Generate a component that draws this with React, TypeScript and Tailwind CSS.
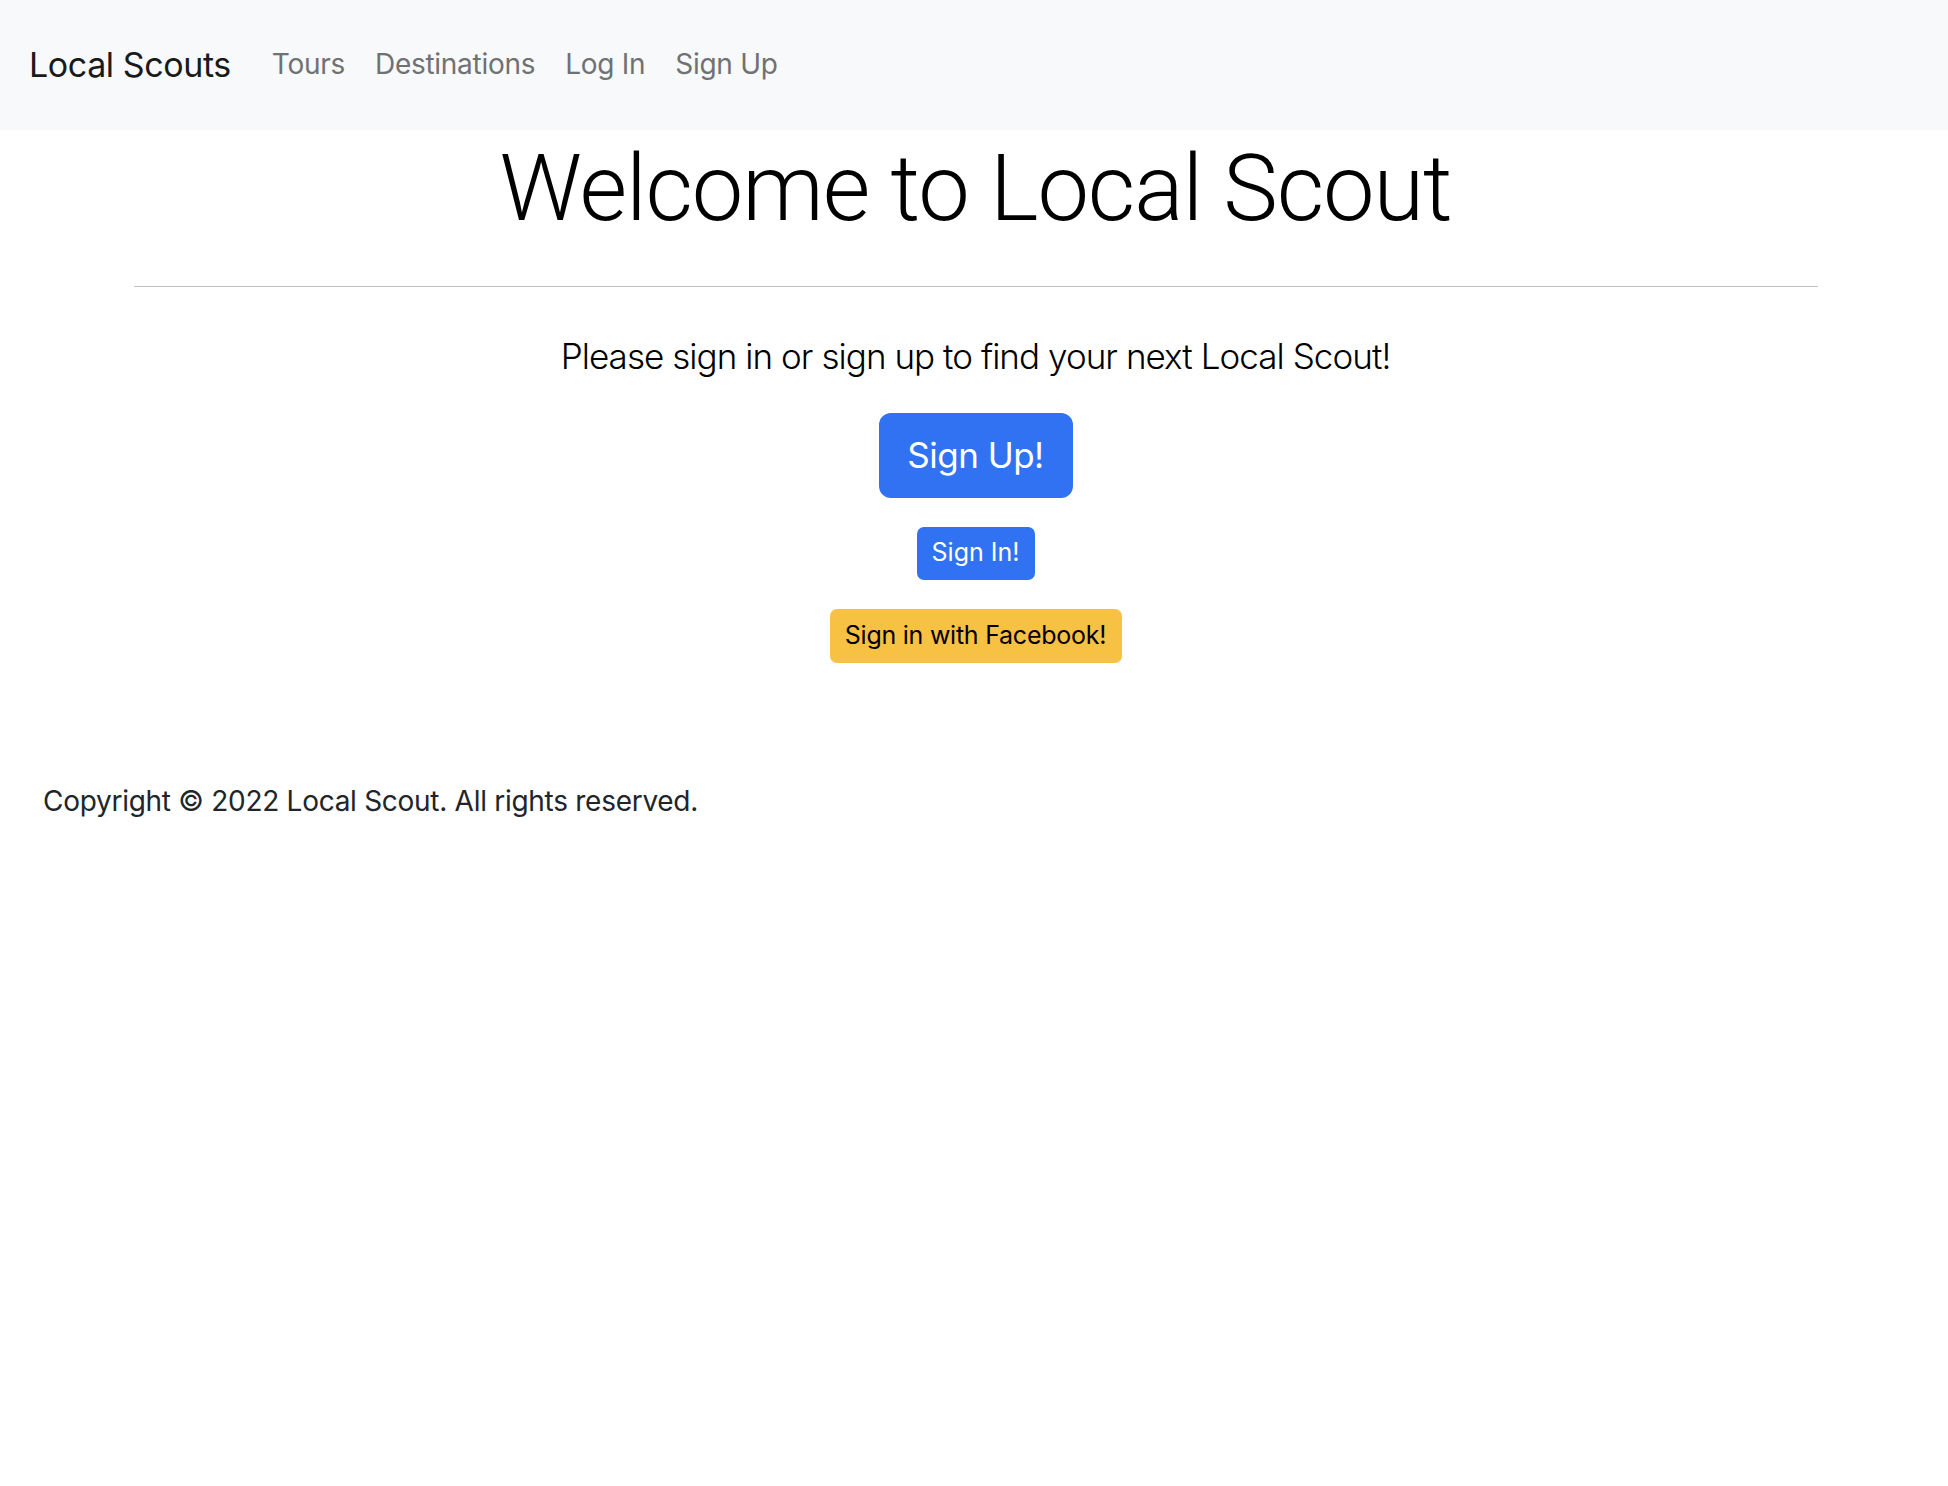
const navLinks = ['Tours', 'Destinations', 'Log In', 'Sign Up'];

export default function App() {
  return (
    <div className="min-h-screen bg-white text-[#212529] font-['Inter','Noto_Sans',sans-serif]">
      {/* Navbar */}
      <nav className="flex h-[130px] items-center bg-[#f8f9fa] px-[29px]">
        <a href="#" className="mr-[41px] text-[34px] leading-none tracking-[-0.012em] text-[#1a1a1a]">
          Local Scouts
        </a>
        <ul className="flex items-center gap-[30px]">
          {navLinks.map((link) => (
            <li key={link}>
              <a href="#" className="text-[28px] leading-none tracking-[-0.01em] text-[#707173]">
                {link}
              </a>
            </li>
          ))}
        </ul>
      </nav>

      {/* Hero */}
      <main className="pl-[3px] text-center">
        <h1 className="pt-[1px] font-['Roboto','Liberation_Sans',sans-serif] text-[92px] font-light leading-[115px] tracking-[-0.012em] text-black">
          Welcome to Local Scout
        </h1>
        <hr className="ml-[131px] mr-[130px] mt-[40px] border-t border-[#bfbfbf]" />
        <p className="mt-[43px] text-[35px] font-light leading-[1.5] tracking-[-0.027em] text-black">
          Please sign in or sign up to find your next Local Scout!
        </p>
        <div className="mt-[30px] flex flex-col items-center gap-[29px]">
          <button className="h-[85px] w-[194px] rounded-[12px] bg-[#3072f2] text-[35px] tracking-[-0.015em] text-white">
            Sign Up!
          </button>
          <button className="h-[53px] w-[118px] rounded-[7px] bg-[#3072f2] text-[25px] text-white">
            Sign In!
          </button>
          <button className="h-[54px] w-[292px] rounded-[7px] bg-[#f7c144] text-[25px] tracking-[-0.01em] text-black">
            Sign in with Facebook!
          </button>
        </div>
      </main>

      {/* Footer */}
      <footer className="mt-[117px] px-[43px] text-[28px] leading-[1.5] tracking-[-0.01em]">
        Copyright © 2022 Local Scout. All rights reserved.
      </footer>
    </div>
  );
}
